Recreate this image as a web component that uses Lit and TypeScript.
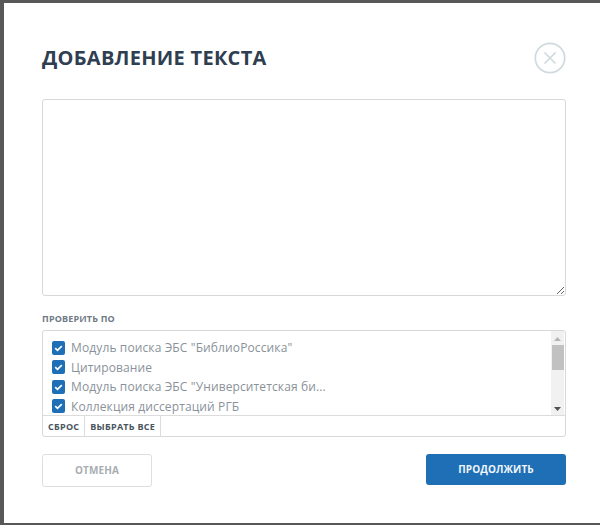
import { LitElement, html, css } from "lit";
import { customElement } from "lit/decorators.js";

const items = [
  'Модуль поиска ЭБС "БиблиоРоссика"',
  "Цитирование",
  'Модуль поиска ЭБС "Университетская би...',
  "Коллекция диссертаций РГБ",
];

@customElement("app-root")
export class AppRoot extends LitElement {
  static styles = css`
    :host { display: block; width: 600px; height: 525px; background: #585858; overflow: hidden; font-family: "Open Sans", "Noto Sans", sans-serif; }
    .modal { box-sizing: border-box; margin: 3px 0 0 4px; width: 596px; height: 520px; background: #fff; padding: 39px 34px 0 38px; display: flex; flex-direction: column; }
    .head { display: flex; justify-content: space-between; align-items: center; height: 32px; }
    h1 { margin: 0; font-size: 20px; line-height: 32px; font-weight: 700; color: #2f3e50; letter-spacing: 0.28px; }
    .close { width: 32px; height: 32px; display: block; }
    textarea { box-sizing: border-box; display: block; margin: 25px 0 0; width: 524px; height: 197px; border: 1px solid #d8d8d8; border-radius: 3px; background: #fff; outline: none; padding: 8px; }
    .label { margin-top: 17px; font-size: 9px; line-height: 12px; font-weight: 700; color: #6f7984; height: 17px; letter-spacing: 0.17px; }
    .box { box-sizing: border-box; width: 524px; height: 107px; border: 1px solid #d8d8d8; border-radius: 3px; display: flex; flex-direction: column; }
    .body { flex: none; height: 84px; display: flex; border-bottom: 1px solid #dcdcdc; overflow: hidden; }
    .list { flex: 1; padding: 7px 0 0 9px; overflow: hidden; }
    .item { display: flex; align-items: center; gap: 6px; height: 19.5px; font-size: 12px; color: #8a9299; white-space: nowrap; letter-spacing: 0.12px; }
    .cb { width: 13px; height: 14px; flex: none; display: block; }
    .bar { width: 13px; margin-right: 1px; background: #f1f1f1; display: flex; flex-direction: column; align-items: center; padding-top: 2px; box-sizing: border-box; }
    .arrow { height: 12px; display: flex; align-items: center; justify-content: center; flex: none; }
    .thumb { width: 12px; height: 25px; background: #c1c1c1; flex: none; }
    .spacer { flex: 1; }
    .foot { flex: 1; display: flex; }
    .foot span { border-right: 1px solid #dcdcdc; padding: 0 5px; font-size: 9px; font-weight: 700; line-height: 21px; color: #4a5560; letter-spacing: 0.25px; }
    .actions { margin-top: 17px; display: flex; justify-content: space-between; width: 524px; }
    button { box-sizing: border-box; font-family: inherit; font-size: 10px; font-weight: 700; border-radius: 3px; padding: 0 0 2px; letter-spacing: 0.1px; }
    .cancel { width: 110px; height: 33px; background: #fff; border: 1px solid #dedede; color: #a8adb1; }
    .go { width: 140px; height: 31px; background: #1e6fb5; border: none; color: #eef5fb; }
  `;

  render() {
    return html`<div class="modal">
      <div class="head">
        <h1>ДОБАВЛЕНИЕ ТЕКСТА</h1>
        <svg class="close" viewBox="0 0 32 32" fill="none" stroke="#d0dade">
          <circle cx="16" cy="16" r="14.7" stroke-width="1.7"></circle>
          <path d="M10.5 10.5 21.5 21.5M21.5 10.5 10.5 21.5" stroke-width="1.7"></path>
        </svg>
      </div>
      <textarea></textarea>
      <div class="label">ПРОВЕРИТЬ ПО</div>
      <div class="box">
        <div class="body">
          <div class="list">
            ${items.map(
              (t) => html`<div class="item">
                <svg class="cb" viewBox="0 0 13 14">
                  <rect width="13" height="14" rx="2" fill="#1e6fb5"></rect>
                  <path d="M3.2 7.1 5.5 9.3 9.8 5.1" fill="none" stroke="#fff" stroke-width="1.7"></path>
                </svg>
                <span>${t}</span>
              </div>`
            )}
          </div>
          <div class="bar">
            <div class="arrow"><svg width="7" height="4" viewBox="0 0 7 4"><path d="M0 4 3.5 0 7 4Z" fill="#b4b4b4"></path></svg></div>
            <div class="thumb"></div>
            <div class="spacer"></div>
            <div class="arrow"><svg width="7" height="4" viewBox="0 0 7 4"><path d="M0 0 3.5 4 7 0Z" fill="#505050"></path></svg></div>
          </div>
        </div>
        <div class="foot"><span>СБРОС</span><span>ВЫБРАТЬ ВСЕ</span></div>
      </div>
      <div class="actions">
        <button class="cancel">ОТМЕНА</button>
        <button class="go">ПРОДОЛЖИТЬ</button>
      </div>
    </div>`;
  }
}
